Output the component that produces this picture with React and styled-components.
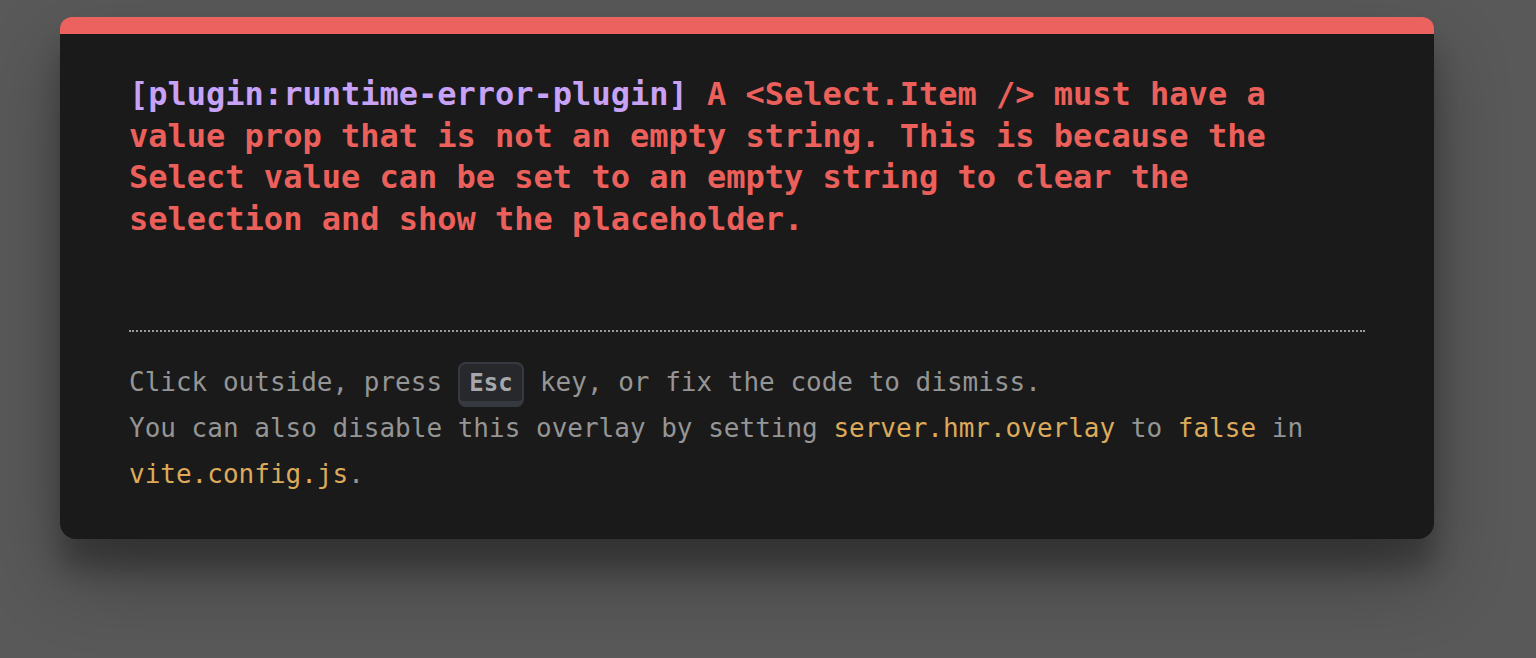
import React from "react";
import styled, { createGlobalStyle } from "styled-components";

const GlobalStyle = createGlobalStyle`
  html, body {
    margin: 0;
    padding: 0;
    background: #595959;
  }
  body {
    font-family: "DejaVu Sans Mono", "Liberation Mono", monospace;
    height: 658px;
    overflow: hidden;
  }
`;

const Backdrop = styled.div`
  width: 100%;
  min-height: 658px;
  padding-top: 17px;
  box-sizing: border-box;
`;

const Window = styled.div`
  width: 1374px;
  margin-left: 60px;
  box-sizing: border-box;
  background: #1a1a1a;
  color: #d8d8d8;
  border-top: 17px solid #ec625e;
  border-radius: 12px 12px 16px 16px;
  padding: 40px 69px 42px 69px;
  box-shadow: 0 38px 76px rgba(0, 0, 0, 0.3), 0 30px 24px rgba(0, 0, 0, 0.22);
  font-family: "DejaVu Sans Mono", "Liberation Mono", monospace;
`;

const Message = styled.pre`
  margin: 0 0 90px;
  font-family: inherit;
  font-size: 32px;
  line-height: 1.3;
  font-weight: 600;
  white-space: pre-wrap;
  color: #ec605c;
`;

const Plugin = styled.span`
  color: #c8a2f6;
`;

const Tip = styled.div`
  border-top: 2px dotted #9a9a9a;
  padding-top: 27px;
  font-size: 26px;
  line-height: 46px;
  color: #959595;
`;

const Code = styled.code`
  font-family: inherit;
  font-size: 26px;
  color: #dcaa5a;
`;

const Kbd = styled.kbd`
  font-family: inherit;
  font-size: 24px;
  font-weight: 700;
  line-height: 1.5;
  background: #26282c;
  color: #a6a7ab;
  padding: 4.8px 9.6px;
  border-radius: 8px;
  border-style: solid;
  border-color: #363940;
  border-width: 2px 2px 6px;
  vertical-align: 1px;
`;

export default function App() {
  return (
    <>
      <GlobalStyle />
      <Backdrop>
        <Window>
          <Message>
            <Plugin>[plugin:runtime-error-plugin] </Plugin>
            A &lt;Select.Item /&gt; must have a value prop that is not an empty
            string. This is because the Select value can be set to an empty
            string to clear the selection and show the placeholder.
          </Message>
          <Tip>
            Click outside, press <Kbd>Esc</Kbd> key, or fix the code to dismiss.
            <br />
            You can also disable this overlay by setting{" "}
            <Code>server.hmr.overlay</Code> to <Code>false</Code> in{" "}
            <Code>vite.config.js</Code>.
          </Tip>
        </Window>
      </Backdrop>
    </>
  );
}
